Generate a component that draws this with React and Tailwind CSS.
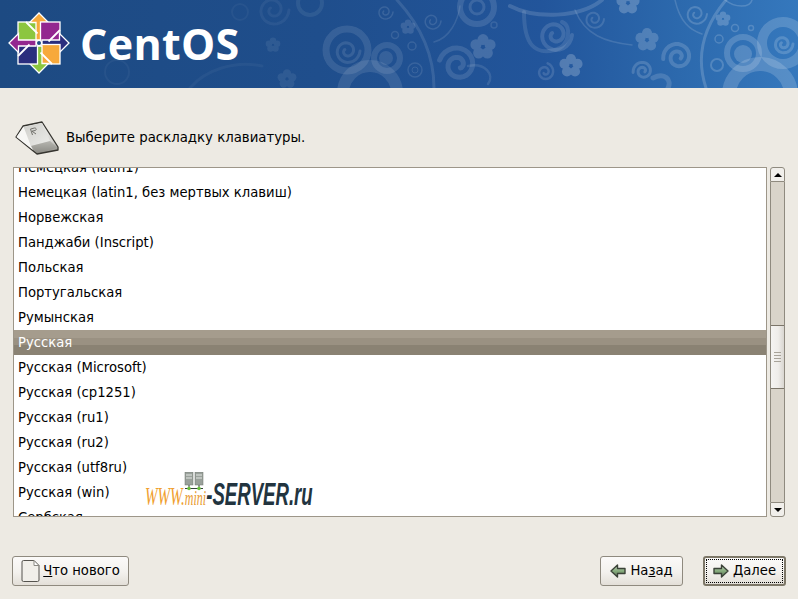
const layouts = [
  'Немецкая (latin1)',
  'Немецкая (latin1, без мертвых клавиш)',
  'Норвежская',
  'Панджаби (Inscript)',
  'Польская',
  'Португальская',
  'Румынская',
  'Русская',
  'Русская (Microsoft)',
  'Русская (cp1251)',
  'Русская (ru1)',
  'Русская (ru2)',
  'Русская (utf8ru)',
  'Русская (win)',
  'Сербская',
];

// spiral path for the header artwork
function spiral(cx, cy, r, turns = 1.6, start = 0) {
  const steps = 40;
  let d = '';
  for (let i = 0; i <= steps; i++) {
    const t = i / steps;
    const a = start + t * turns * Math.PI * 2;
    const rr = r * (1 - t * 0.8);
    d += `${i ? 'L' : 'M'}${(cx + Math.cos(a) * rr).toFixed(1)} ${(cy + Math.sin(a) * rr).toFixed(1)}`;
  }
  return d;
}

function Flower({ x, y, r = 8, o = 0.22 }) {
  return (
    <g fill="#fff" opacity={o}>
      {[0, 72, 144, 216, 288].map((a) => (
        <circle key={a} cx={x + Math.sin((a * Math.PI) / 180) * r * 0.62} cy={y - Math.cos((a * Math.PI) / 180) * r * 0.62} r={r * 0.46} />
      ))}
    </g>
  );
}

function Ring({ x, y, r, w = 4, o = 0.16 }) {
  return <circle cx={x} cy={y} r={r} fill="none" stroke="#fff" strokeWidth={w} opacity={o} />;
}

function Swirl({ x, y, r, w = 3, o = 0.16, start = 0 }) {
  return <path d={spiral(x, y, r, 1.6, start)} fill="none" stroke="#fff" strokeWidth={w} opacity={o} strokeLinecap="round" />;
}

function Curve({ d, w = 2, o = 0.16 }) {
  return <path d={d} fill="none" stroke="#fff" strokeWidth={w} opacity={o} strokeLinecap="round" />;
}

function HeaderArt() {
  return (
    <svg className="absolute inset-0 opacity-[0.72]" width="798" height="88" viewBox="0 0 798 88">
      <Ring x={240} y={12} r={8} w={2} o={0.06} />
      <Ring x={117} y={72} r={12} w={2} o={0.06} />
      <Swirl x={273} y={10} r={16} w={3} o={0.08} />
      <Flower x={273} y={45} r={7} o={0.1} />
      <Flower x={287} y={79} r={9} o={0.1} />
      <Curve d="M190 88C205 70 235 60 262 66" w={3} o={0.06} />

      <Ring x={310} y={3} r={12} w={4} o={0.1} />
      <Ring x={347} y={50} r={21} w={7} o={0.15} />
      <Swirl x={347} y={51} r={13} w={3} o={0.15} />
      <Ring x={387} y={58} r={13} w={6} o={0.15} />
      <circle cx={386} cy={58} r={7} fill="#fff" opacity={0.14} />
      <Ring x={370} y={93} r={27} w={12} o={0.15} />
      <Curve d="M397 0C420 25 434 55 434 88" w={3} o={0.15} />
      <Curve d="M434 42C450 38 458 20 460 6" w={1.5} o={0.15} />
      <Swirl x={432} y={21} r={9} w={1.5} o={0.16} />
      <Swirl x={385} y={12} r={8} w={1.5} o={0.16} />
      <Ring x={415} y={70} r={7} w={1.5} o={0.15} />
      <circle cx={415} cy={70} r={3} fill="none" stroke="#fff" opacity={0.15} />
      <Ring x={412} y={46} r={4} w={1.5} o={0.15} />
      <Ring x={395} y={35} r={3.5} w={1.5} o={0.15} />
      <Flower x={408} y={27} r={7} o={0.17} />
      <Flower x={483} y={47} r={12} o={0.22} />
      <Swirl x={458} y={65} r={19} w={5} o={0.17} start={3.4} />
      <Curve d="M468 66C485 62 495 75 488 84" w={2.5} o={0.15} />
      <Ring x={477} y={7} r={17} w={6} o={0.17} />
      <Ring x={477} y={7} r={7} w={3} o={0.17} />
      <Ring x={494} y={25} r={3} w={1.5} o={0.15} />
      <Curve d="M510 6C535 19 580 18 602 0" w={4} o={0.2} />
      <Swirl x={555} y={35} r={17} w={4} o={0.18} />
      <Curve d="M524 12C524 45 535 55 555 50C570 46 572 25 562 22" w={4} o={0.15} />
      <Swirl x={545} y={72} r={9} w={2.5} o={0.18} start={5} />
      <Curve d="M575 10C585 35 605 42 632 45" w={1.5} o={0.18} />
      <Swirl x={594} y={19} r={10} w={2} o={0.18} />
      <Flower x={571} y={66} r={11} o={0.3} />
      <Flower x={628} y={3} r={11} o={0.3} />
      <Flower x={647} y={40} r={11} o={0.25} />

      <Swirl x={678} y={57} r={15} w={4} o={0.22} start={3} />
      <Swirl x={643} y={71} r={10} w={3} o={0.22} start={3} />
      <Curve d="M653 78C665 72 672 80 668 88" w={5} o={0.2} />
      <Curve d="M726 0C705 25 695 55 706 88" w={3} o={0.24} />
      <Swirl x={696} y={14} r={11} w={2} o={0.24} />
      <Curve d="M675 0C680 22 690 30 702 34" w={1.5} o={0.2} />
      <Curve d="M725 0C735 8 750 8 752 0" w={1.5} o={0.24} />
      <Flower x={723} y={19} r={7} o={0.28} />
      <Ring x={717} y={65} r={6} w={2} o={0.24} />
      <Ring x={719} y={39} r={4} w={1.5} o={0.24} />
      <Ring x={735} y={28} r={3.5} w={1.5} o={0.24} />
      <Ring x={751} y={28} r={2.5} w={1.5} o={0.24} />
      <Ring x={783} y={43} r={21} w={10} o={0.24} />
      <Swirl x={783} y={44} r={10} w={3} o={0.24} />
      <Ring x={743} y={53} r={16} w={6} o={0.24} />
      <circle cx={743} cy={54} r={9} fill="#fff" opacity={0.24} />
      <Ring x={760} y={95} r={31} w={14} o={0.24} />
    </svg>
  );
}

function Logo() {
  const parts = [
    { rot: 0, square: '#8cc63f', arrow: '#f7a93b' },
    { rot: 90, square: '#93278f', arrow: '#2b2e7e' },
    { rot: 180, square: '#f7a93b', arrow: '#8cc63f' },
    { rot: 270, square: '#2b2e7e', arrow: '#93278f' },
  ];
  return (
    <svg width="62" height="62" viewBox="-31 -31 62 62" className="shrink-0">
      {parts.map((p) => (
        <g key={p.rot} transform={`rotate(${p.rot})`} stroke="#fff" strokeWidth="1.300">
          <rect x="-21" y="-21" width="19.500" height="19.500" fill={p.square} />
          <path d="M0-30L9.500-20.500 3-20.500 3-3-3-3-3-20.500-9.500-20.500Z" fill={p.arrow} />
          <path d="M-13-21L-1.500-9.500" fill="none" strokeWidth="1.800" />
        </g>
      ))}
      <circle r="2.600" fill="#1f4a84" stroke="#fff" strokeWidth="1.200" />
    </svg>
  );
}

function KeyIcon() {
  return (
    <svg width="45" height="37" viewBox="0 0 45 37" className="shrink-0">
      <defs>
        <linearGradient id="keyTop" x1="0" y1="0" x2="1" y2="1">
          <stop offset="0" stopColor="#cfcfcb" />
          <stop offset="1" stopColor="#ecece9" />
        </linearGradient>
        <linearGradient id="keyFront" x1="0" y1="0" x2="0" y2="1">
          <stop offset="0" stopColor="#f6f6f4" />
          <stop offset="0.6" stopColor="#d6d5d1" />
          <stop offset="1" stopColor="#85847e" />
        </linearGradient>
      </defs>
      <path d="M1 18L8 7 27 3 43 28 43 31 22 35 17 31Z" fill="url(#keyFront)" stroke="#35342f" strokeWidth="1.300" strokeLinejoin="round" />
      <path d="M8.500 8L27 4 35 22 16 27Z" fill="url(#keyTop)" />
      <path d="M35 22L42.500 29 22 34 16 27Z" fill="#8f8e88" opacity="0.45" />
      <path d="M1.500 18L8.500 8 16 27 18 31Z" fill="#f7f7f5" />
      <path d="M15.500 10l4-1c2 0 2.500 2 .500 2.500l-3 .7 4 2.800M15.500 10l2 6" fill="none" stroke="#72716c" strokeWidth="1" />
    </svg>
  );
}

function DocIcon() {
  return (
    <svg width="20" height="24" viewBox="0 0 20 24" className="shrink-0">
      <path d="M2.500 1.500H13L18 6.500V21a1.500 1.500 0 0 1-1.500 1.500h-14A1.500 1.500 0 0 1 1 21V3a1.500 1.500 0 0 1 1.500-1.500Z" fill="#f1efea" stroke="#55534e" />
      <path d="M13 1.500V6.500H18Z" fill="#fff" stroke="#8b8983" />
    </svg>
  );
}

function GtkButton({ children, className = '' }) {
  return (
    <button className={`flex h-[30px] items-center justify-center rounded-[3px] border bg-[linear-gradient(180deg,#fbfaf9_0%,#f3f1ed_55%,#e3dfd8_100%)] text-[13.2px] text-black ${className}`}>
      {children}
    </button>
  );
}

function ArrowIcon({ dir }) {
  return (
    <svg width="16" height="14" viewBox="0 0 16 14" className={dir === 'left' ? 'shrink-0 -scale-x-100' : 'shrink-0'}>
      <defs>
        <linearGradient id={`arrow-${dir}`} x1="0" y1="0" x2="0" y2="1">
          <stop offset="0" stopColor="#c5cfc0" />
          <stop offset="0.5" stopColor="#86ad7c" />
          <stop offset="1" stopColor="#5c6a57" />
        </linearGradient>
      </defs>
      <path d="M1 4.500H8.500V1L15 7 8.500 13V9.500H1Z" fill={`url(#arrow-${dir})`} stroke="#3b4238" strokeWidth="1.400" strokeLinejoin="round" />
    </svg>
  );
}

function Watermark() {
  return (
    <div className="pointer-events-none absolute left-[131px] top-[304px] h-[40px] w-[175px]">
      <svg width="22" height="20" viewBox="0 0 22 20" className="absolute left-[39px] top-0">
        <rect x="1" y="0" width="8" height="13" fill="#9aa19b" stroke="#6d746e" strokeWidth="0.500" />
        <rect x="11" y="0" width="8" height="13" fill="#9aa19b" stroke="#6d746e" strokeWidth="0.500" />
        <path d="M2 3h6M2 6h6M12 3h6M12 6h6" stroke="#e4e7e4" />
        <path d="M5 13v3M15 13v3M1 16.500h18" stroke="#33413b" />
        <circle cx="5" cy="16.500" r="1.800" fill="#69c23a" />
        <circle cx="15" cy="16.500" r="1.800" fill="#69c23a" />
      </svg>
      <div className="absolute left-0 top-[8px] flex w-[300px] origin-top-left scale-x-[0.6] items-baseline whitespace-nowrap">
        <span className="font-['Liberation_Serif',serif] text-[25px] italic leading-[30px] text-[#f0a030]">WWW.</span>
        <span className="font-['Liberation_Serif',serif] text-[20px] italic leading-[30px] text-[#e89a30]">mini</span>
        <span className="font-['Liberation_Sans',sans-serif] text-[31px] font-bold italic leading-[30px] text-[#22343f]">-SERVER.ru</span>
      </div>
    </div>
  );
}

export default function App() {
  return (
    <div className="flex h-[599px] w-[798px] flex-col overflow-hidden bg-[#edeae3] font-['DejaVu_Sans',sans-serif]">
      <header className="relative flex h-[88px] shrink-0 items-center overflow-hidden bg-[linear-gradient(90deg,#1d4a82_0%,#1f4e8c_40%,#22559b_68%,#2c69ad_85%,#3578bd_100%)] pl-[8px]">
        <HeaderArt />
        <div className="relative -mt-[2px] flex items-center gap-[10px]">
          <Logo />
          <span className="font-['Open_Sans',sans-serif] text-[43px] font-bold leading-none tracking-[0.3px] text-white">CentOS</span>
        </div>
      </header>

      <div className="mt-[31px] flex h-[37px] items-center gap-[6px] pl-[15px] text-[13.3px] text-black">
        <KeyIcon />
        <span>Выберите раскладку клавиатуры.</span>
      </div>

      <div className="ml-[13px] mt-[11px] flex h-[350px] w-[772px] gap-[3px]">
        <div className="relative h-full w-[754px] overflow-hidden border border-[#9d9689] bg-white text-[13.2px] text-black">
          <ul className="-mt-[13px]">
            {layouts.map((name) => (
              <li
                key={name}
                className={
                  name === 'Русская'
                    ? 'flex h-[25px] items-center bg-[linear-gradient(180deg,#a59c8d_0%,#a59c8d_32%,#9a9182_32%,#9a9182_60%,#8a8273_60%,#8a8273_100%)] pl-[4px] text-white'
                    : 'flex h-[25px] items-center pl-[4px]'
                }
              >
                {name}
              </li>
            ))}
          </ul>
          <Watermark />
        </div>

        <div className="flex w-[15px] flex-col">
          <div className="flex h-[15px] items-center justify-center rounded-t-[3px] border border-[#8f8a7f] bg-[#f1efeb]">
            <div className="h-0 w-0 border-x-[4px] border-b-[4px] border-x-transparent border-b-black" />
          </div>
          <div className="flex flex-1 flex-col border-x border-[#8f8a7f] bg-[#d9d4ca]">
            <div className="h-[143px]" />
            <div className="flex h-[64px] flex-col items-center justify-center gap-[2px] border-y border-[#7b7569] bg-[linear-gradient(90deg,#f5f4f2_0%,#efedea_55%,#d9d6d0_100%)]">
              <div className="h-px w-[7px] bg-[#a8a399]" />
              <div className="h-px w-[7px] bg-[#a8a399]" />
              <div className="h-px w-[7px] bg-[#a8a399]" />
              <div className="h-px w-[7px] bg-[#a8a399]" />
            </div>
          </div>
          <div className="flex h-[15px] items-center justify-center rounded-b-[3px] border border-[#8f8a7f] bg-[#f1efeb]">
            <div className="h-0 w-0 border-x-[4px] border-t-[4px] border-x-transparent border-t-black" />
          </div>
        </div>
      </div>

      <footer className="mt-[39px] flex items-start pl-[12px] pr-[12px]">
        <GtkButton className="w-[117px] gap-[2px] border-[#8f8a7f]">
          <DocIcon />
          <span><u>Ч</u>то нового</span>
        </GtkButton>
        <div className="ml-auto flex gap-[20px]">
          <GtkButton className="w-[83px] gap-[4px] border-[#8f8a7f]">
            <ArrowIcon dir="left" />
            <span>На<u>з</u>ад</span>
          </GtkButton>
          <GtkButton className="w-[83px] border-2 border-[#7d7768]">
            <span className="flex h-[24px] w-[77px] items-center justify-center gap-[4px] border border-dotted border-black">
              <ArrowIcon dir="right" />
              <span><u>Д</u>алее</span>
            </span>
          </GtkButton>
        </div>
      </footer>
    </div>
  );
}
